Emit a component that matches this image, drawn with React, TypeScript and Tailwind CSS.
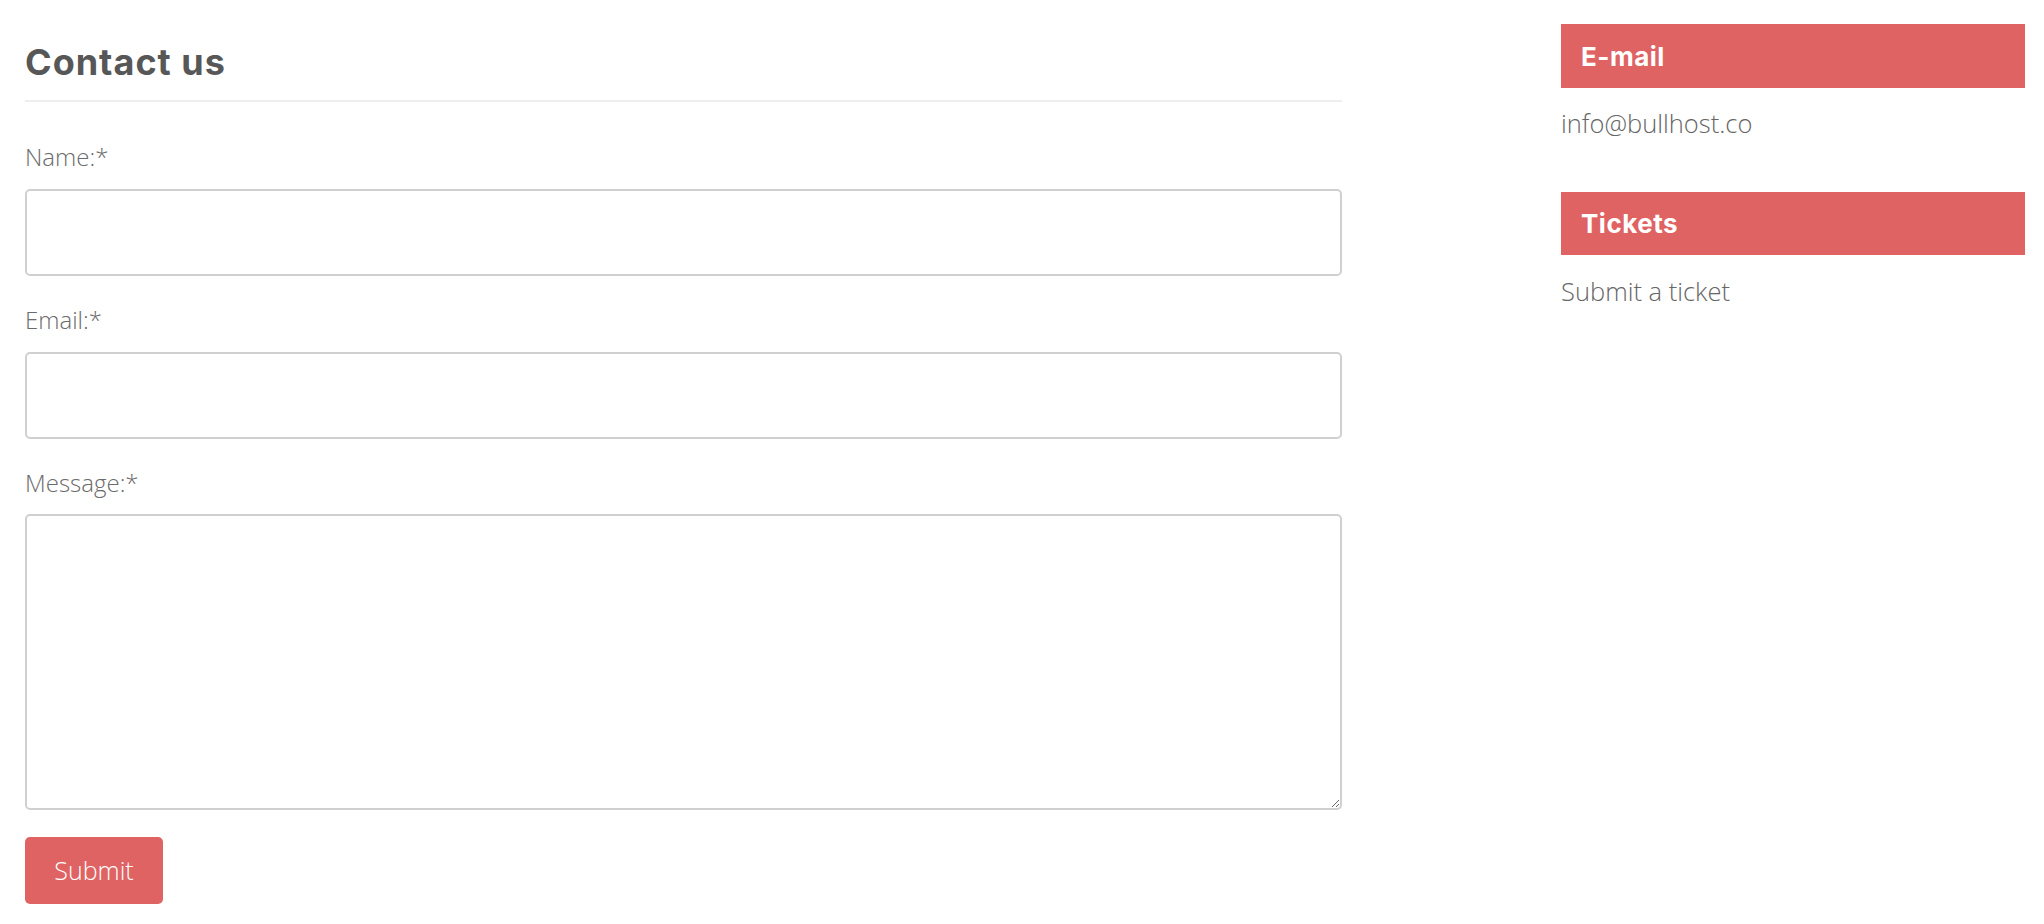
export default function App() {
  const body = { fontFamily: '"Open Sans", "Noto Sans", sans-serif' };
  const head = { fontFamily: 'Inter, "Liberation Sans", sans-serif' };

  return (
    <div className="min-h-screen bg-white flex pt-[24px] pl-[25px] pr-[19px]" style={body}>
      <main className="w-[1317px] pt-[16px]">
        <h1 className="text-[36px] leading-[44px] font-bold tracking-[1px] text-[#575757] pb-[16px] border-b-2 border-[#eeeeee]" style={head}>
          Contact us
        </h1>
        <form className="pt-[37px] flex flex-col">
          <label className="text-[24px] leading-[36px] font-light text-[#6b6b6b] mb-[14px]">Name:*</label>
          <input className="h-[87px] border-2 border-[#d0d0d0] rounded-[5px] outline-none px-3" />
          <label className="text-[24px] leading-[36px] font-light text-[#6b6b6b] mt-[26px] mb-[14px]">Email:*</label>
          <input className="h-[87px] border-2 border-[#d0d0d0] rounded-[5px] outline-none px-3" />
          <label className="text-[24px] leading-[36px] font-light text-[#6b6b6b] mt-[26px] mb-[13px]">Message:*</label>
          <textarea className="h-[296px] border-2 border-[#d0d0d0] rounded-[5px] outline-none p-3" />
          <div className="mt-[27px]">
            <button type="button" className="w-[138px] h-[67px] bg-[#df6363] text-white text-[25px] font-light rounded-[5px]">
              Submit
            </button>
          </div>
        </form>
      </main>

      <aside className="w-[464px] ml-auto">
        <div className="h-[64px] bg-[#df6363] flex items-center pl-[20px]">
          <h3 className="text-[26px] font-bold tracking-[0.5px] text-white" style={head}>E-mail</h3>
        </div>
        <p className="mt-[17px] text-[25.5px] leading-[36px] font-light text-[#666666]">info@bullhost.co</p>

        <div className="mt-[51px] h-[63px] bg-[#df6363] flex items-center pl-[20px]">
          <h3 className="text-[26px] font-bold tracking-[0.5px] text-white" style={head}>Tickets</h3>
        </div>
        <p className="mt-[18px] text-[25.5px] leading-[36px] font-light text-[#666666]">Submit a ticket</p>
      </aside>
    </div>
  );
}
